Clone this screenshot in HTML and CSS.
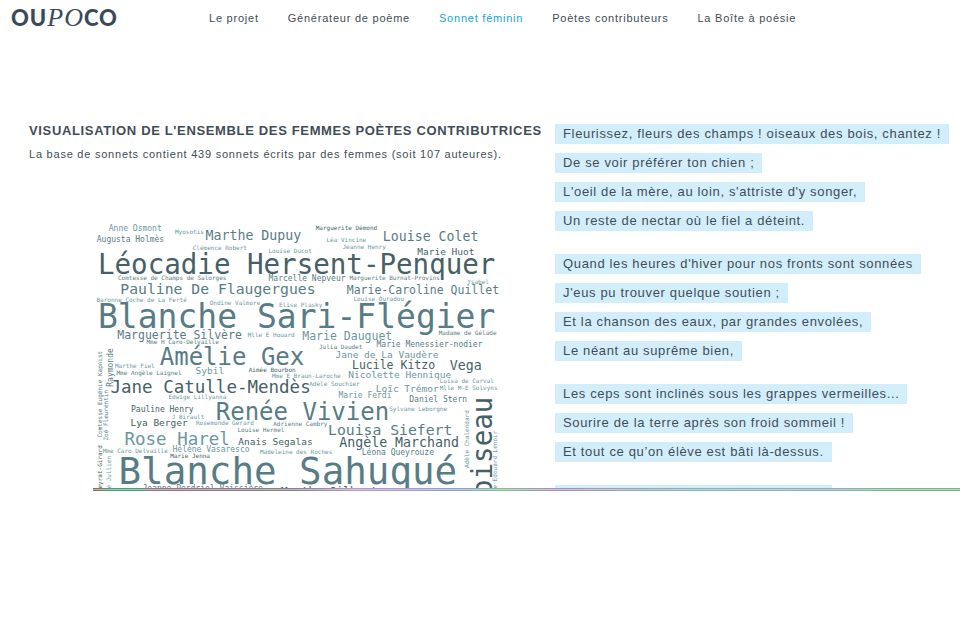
FILE: index.html
```html
<!DOCTYPE html>
<html lang="fr">
<head>
<meta charset="utf-8">
<meta name="viewport" content="width=device-width, initial-scale=1">
<title>Oupoco – Sonnet féminin</title>
<link rel="stylesheet" href="styles.css">
</head>
<body>
<header class="site-header">
  <a class="logo" href="#">OU<i>PO</i>CO</a>
  <nav class="menu">
    <a href="#">Le projet</a>
    <a href="#">Générateur de poème</a>
    <a href="#" class="active">Sonnet féminin</a>
    <a href="#">Poètes contributeurs</a>
    <a href="#">La Boîte à poésie</a>
  </nav>
</header>
<main class="content">
  <section class="overview">
    <h1>Visualisation de l'ensemble des femmes poètes contributrices</h1>
    <p>La base de sonnets contient 439 sonnets écrits par des femmes (soit 107 auteures).</p>
    <svg class="cloud" viewBox="0 0 1648 1096">
      <g class="s24 light">
        <text x="340" y="76">Myosotis</text>
        <text x="411" y="138">Clémence Robert</text>
        <text x="714" y="153">Louise Ducot</text>
        <text x="112" y="258" class="mid">Comtesse de Champs de Salorges</text>
        <text x="26" y="346">Baronne Coche de La Ferté</text>
        <text x="479" y="359">Ondine Valmore</text>
        <text x="756" y="367">Elise Plasky</text>
        <text x="903" y="60" class="dark">Marguerite Démond</text>
        <text x="946" y="109">Léa Vincine</text>
        <text x="1010" y="135">Jeanne Henry</text>
        <text x="1038" y="261" class="mid">Marguerite Burnat-Provins</text>
        <text x="1509" y="276">Ysabel</text>
        <text x="1054" y="343">Louise Ouradou</text>
        <text x="631" y="488">Mlle E Houard</text>
        <text x="226" y="516" class="mid">Mme H Caro-Delvaille</text>
        <text x="100" y="611">Marthe Fiel</text>
        <text x="106" y="641" class="mid">Mme Angèle Laignel</text>
        <text x="635" y="628" class="dark">Aimée Bourbon</text>
        <text x="728" y="651">Mme E Braun-Laroche</text>
        <text x="314" y="735">Edwige Lillyanna</text>
        <text x="327" y="816">J Birault</text>
        <text x="424" y="841">Rosemonde Gérard</text>
        <text x="733" y="844" class="mid">Adrienne Cambry</text>
        <text x="590" y="868" class="mid">Louise Hermel</text>
        <text x="51" y="952">Mme Caro Delvaille</text>
        <text x="321" y="971" class="dark">Marie Jenna</text>
        <text x="680" y="957">Madeleine des Roches</text>
        <text x="1395" y="481" class="mid">Madame de Gélade</text>
        <text x="916" y="535" class="mid">Julia Daudet</text>
        <text x="877" y="684">Adèle Souchier</text>
        <text x="1399" y="673">Luisa de Carval</text>
        <text x="1399" y="700">Mlle M-E Solvyns</text>
        <text x="1197" y="784">Sylvane Leborgne</text>
        <text transform="translate(47 890) rotate(-90)" class="mid">Comtesse Eugénie Kapnist</text>
        <text transform="translate(71 902) rotate(-90)" class="mid">Zoé Fleurentin</text>
        <text transform="translate(47 1094) rotate(-90)" class="dark">eyrat-Girard</text>
        <text transform="translate(82 1094) rotate(-90)">e Jullien</text>
        <text transform="translate(1517 1012) rotate(-90)">Adèle Chalendard</text>
        <text transform="translate(1629 1094) rotate(-90)">e Edouard Lenoir</text>
      </g>
      <g class="s32 mid">
        <text x="75" y="62" class="light">Anne Osmont</text>
        <text x="27" y="107">Augusta Holmès</text>
        <text x="714" y="263">Marcelle Nepveur</text>
        <text x="164" y="787" class="dark">Pauline Henry</text>
        <text x="330" y="949" class="light">Hélène Vasaresco</text>
        <text x="210" y="1104">Jeanne Perdriel-Vaissière</text>
        <text x="1146" y="529">Marie Menessier-nodier</text>
        <text x="994" y="733" class="light">Marie Ferdi</text>
        <text x="1277" y="748">Daniel Stern</text>
        <text x="1087" y="961">Léona Queyrouze</text>
        <text transform="translate(91 687) rotate(-90)">Raymonde</text>
      </g>
      <g class="s38 light">
        <text x="1309" y="160" class="dark">Marie Huot</text>
        <text x="422" y="637">Sybil</text>
        <text x="162" y="845" class="dark">Lya Berger</text>
        <text x="593" y="920" class="dark">Anais Segalas</text>
        <text x="982" y="571">Jane de La Vaudère</text>
        <text x="1033" y="653">Nicolette Hennique</text>
        <text x="1143" y="707">Loïc Trémor</text>
      </g>
      <g class="s46 mid">
        <text x="1027" y="316">Marie-Caroline Quillet</text>
        <text x="109" y="495">Marguerite Silvère</text>
        <text x="849" y="500" class="light">Marie Dauguet</text>
        <text x="1048" y="615" class="dark">Lucile Kitzo</text>
        <text x="763" y="1124" class="dark">Marthe Gilbert</text>
      </g>
      <g class="s53 mid">
        <text x="462" y="100">Marthe Dupuy</text>
        <text x="1171" y="105">Louise Colet</text>
        <text x="1439" y="619" class="dark">Vega</text>
        <text x="997" y="928" class="dark">Angèle Marchand</text>
      </g>
      <g class="s59 mid">
        <text x="121" y="316">Pauline De Flaugergues</text>
        <text x="952" y="881">Louisa Siefert</text>
      </g>
      <g class="s70">
        <text x="82" y="711" class="dark">Jane Catulle-Mendès</text>
        <text x="138" y="921" class="light">Rose Harel</text>
      </g>
      <g class="s96 mid">
        <text x="279" y="599">Amélie Gex</text>
        <text x="503" y="819">Renée Vivien</text>
      </g>
      <g class="s110 dark">
        <text x="32" y="236">Léocadie Hersent-Penquer</text>
        <text transform="translate(1607 1124) rotate(-90)">oiseau</text>
      </g>
      <text x="32" y="453" class="s132 mid">Blanche Sari-Flégier</text>
      <text x="114" y="1075" class="s150 mid">Blanche Sahuqué</text>
    </svg>
  </section>
  <section class="poem">
    <div class="stanza">
      <p>Fleurissez, fleurs des champs ! oiseaux des bois, chantez !</p>
      <p>De se voir préférer ton chien ;</p>
      <p>L'oeil de la mère, au loin, s'attriste d'y songer,</p>
      <p>Un reste de nectar où le fiel a déteint.</p>
    </div>
    <div class="stanza">
      <p>Quand les heures d'hiver pour nos fronts sont sonnées</p>
      <p>J'eus pu trouver quelque soutien ;</p>
      <p>Et la chanson des eaux, par grandes envolées,</p>
      <p>Le néant au suprême bien,</p>
    </div>
    <div class="stanza">
      <p>Les ceps sont inclinés sous les grappes vermeilles...</p>
      <p>Sourire de la terre après son froid sommeil !</p>
      <p>Et tout ce qu’on élève est bâti là-dessus.</p>
    </div>
    <div class="next-verse"></div>
  </section>
</main>
<div class="edge"></div>
</body>
</html>
```
FILE: styles.css
```css
* { box-sizing: border-box; }

body {
  margin: 0;
  background: #fff;
  color: #414d57;
  font-family: "Liberation Sans", Arial, sans-serif;
  letter-spacing: 0;
}

p, h1 { margin: 0; }

a { color: inherit; text-decoration: none; }

.site-header {
  display: flex;
  align-items: center;
  height: 36px;
  padding-left: 11px;
}

.logo {
  width: 198px;
  color: #3a4a59;
  font: 900 22px/36px Lato, sans-serif;
  letter-spacing: 1px;
}

.logo i {
  font: italic 400 26px/36px "Liberation Serif", serif;
}

.menu {
  display: flex;
  gap: 29px;
  font-size: 11px;
  letter-spacing: 0.07em;
  line-height: 34px;
  white-space: nowrap;
}

.menu .active { color: #16a5de; }

.content {
  display: grid;
  grid-template-columns: 526px 1fr;
  padding: 88px 0 0 29px;
}

h1 {
  font-size: 13px;
  letter-spacing: 0.05em;
  line-height: 14px;
  text-transform: uppercase;
  white-space: nowrap;
}

.overview p {
  margin-top: 9px;
  font-size: 11px;
  letter-spacing: 0.07em;
  line-height: 14px;
}

.cloud {
  display: block;
  width: 412px;
  max-width: 100%;
  margin: 54px 0 0 61px;
  font-family: "DejaVu Sans Mono", monospace;
}

.s24 { font-size: 24px; }
.s32 { font-size: 32px; }
.s38 { font-size: 38px; }
.s46 { font-size: 46px; }
.s53 { font-size: 53px; }
.s59 { font-size: 59px; }
.s70 { font-size: 70px; }
.s96 { font-size: 96px; }
.s110 { font-size: 110px; }
.s132 { font-size: 132px; }
.s150 { font-size: 150px; }

.dark { fill: #456067; }
.mid { fill: #587c85; }
.light { fill: #6c97a1; }

.poem {
  display: flex;
  flex-direction: column;
  gap: 23px;
}

.stanza {
  display: flex;
  flex-direction: column;
  align-items: flex-start;
  gap: 9px;
}

.stanza p {
  padding: 0 8px;
  background: #d3eefb;
  font-size: 13px;
  letter-spacing: 0.05em;
  line-height: 20px;
  white-space: nowrap;
}

.next-verse {
  width: 277px;
  height: 4px;
  background: #d3eefb;
}

.edge {
  position: relative;
  height: 3px;
  margin: -1px 0 0 93px;
  background:
    linear-gradient(#fff0, #fff0 1px, #ffffff70 1px, #ffffff70 2px, #fff0 2px),
    linear-gradient(90deg, #a0625f 0, #4aa07c 18px, #4aa07c 45px, #9b7384 60px, #87808e 200px, #b59ac4 260px, #8e9fd0 370px, #84bd95 410px, #a98fc0 460px, #86b5bb 600px, #8dadc0 740px, #7cb688 800px);
}
```
